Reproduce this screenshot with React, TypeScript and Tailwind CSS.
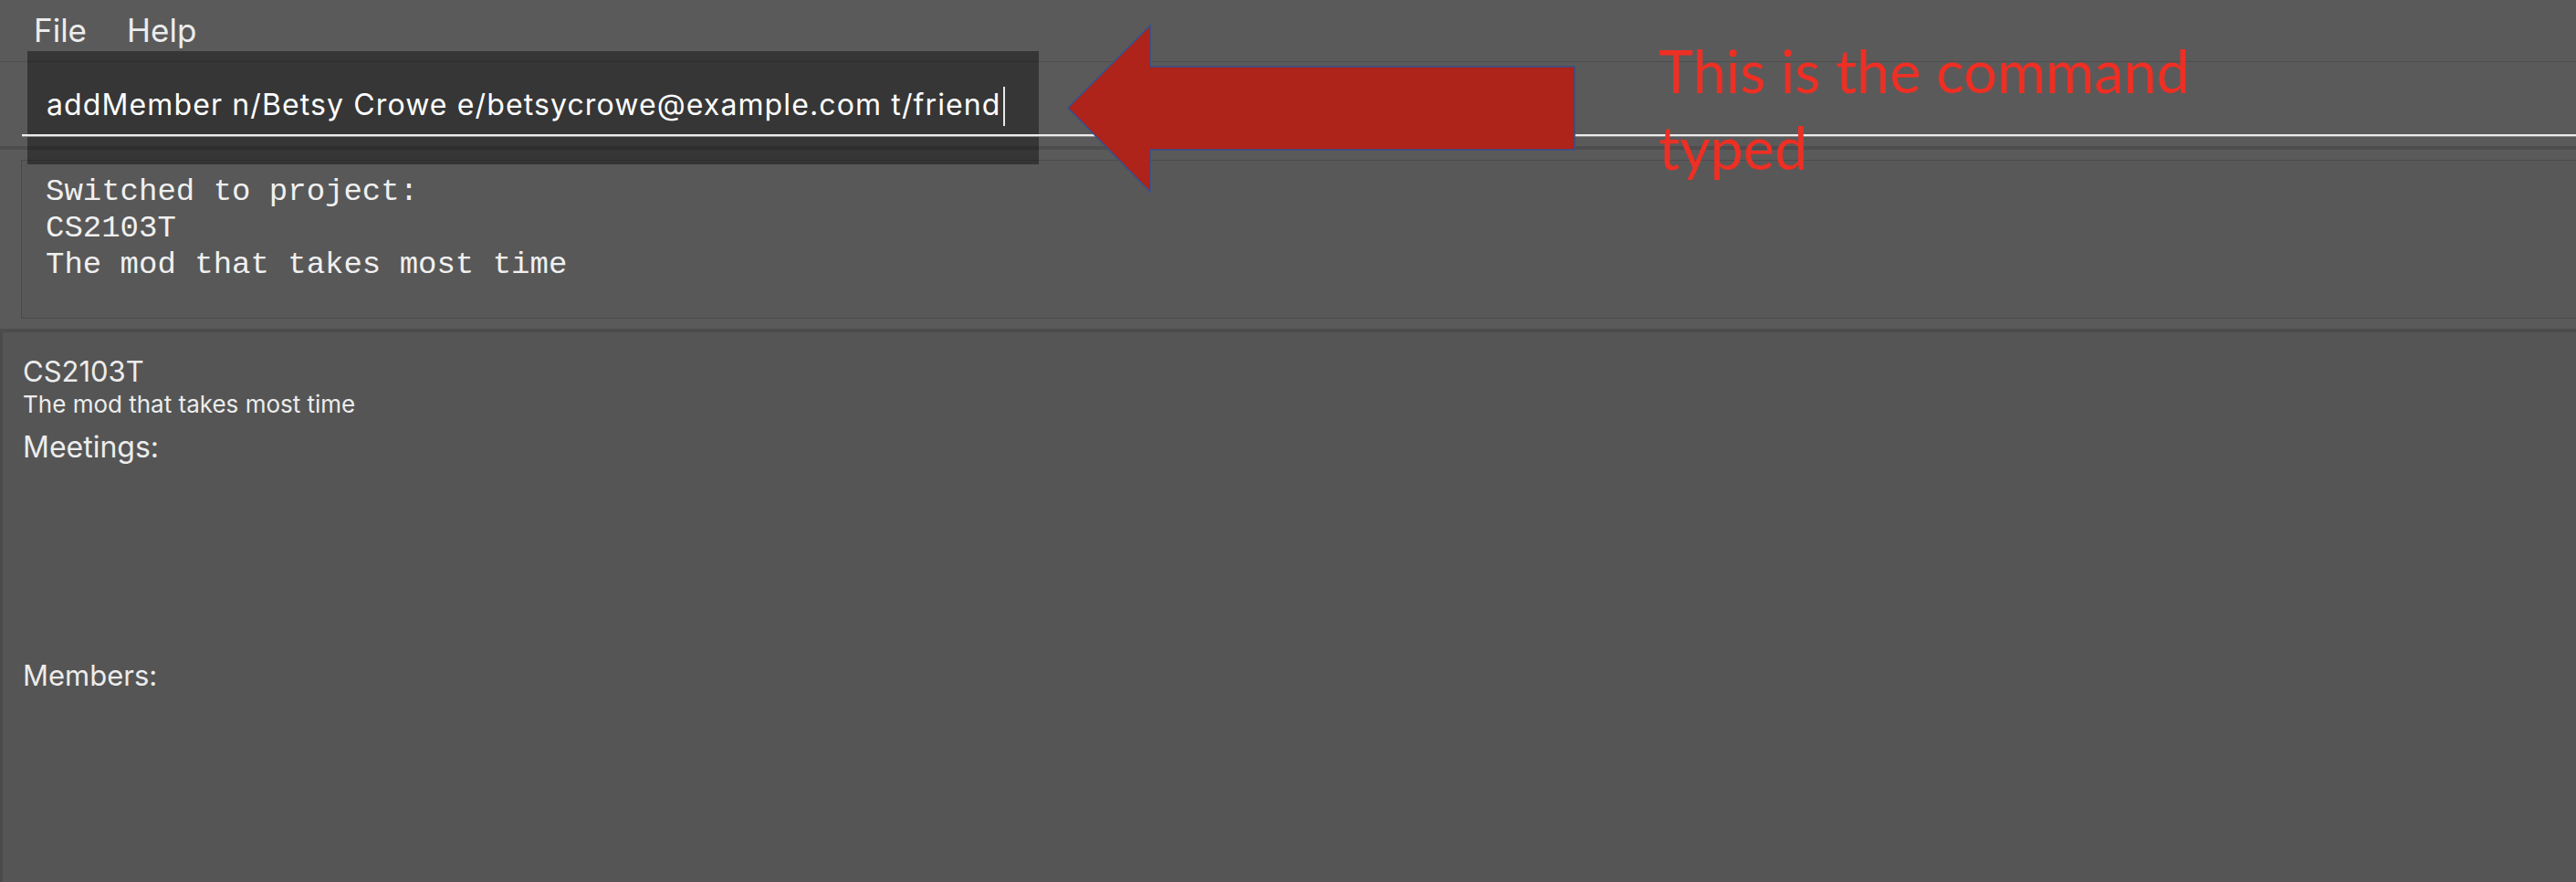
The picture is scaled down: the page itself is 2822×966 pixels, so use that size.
export default function App() {
  const sans = { fontFamily: "Inter, 'Liberation Sans', sans-serif" };
  return (
    <div className="relative w-full h-[966px] overflow-hidden bg-[#5a5a5a] flex flex-col text-[#f2f2f2]" style={sans}>
      {/* menu bar */}
      <div className="h-[68px] shrink-0 border-b border-[#4e4e4e] flex items-center pl-[37px] gap-[44px] text-[35px] leading-none text-[#ececec]">
        <span>File</span>
        <span>Help</span>
      </div>

      {/* command box */}
      <div className="h-[92px] shrink-0 flex items-end pl-[24px] pb-[10px]">
        <div className="relative z-10 w-full">
          <div className="flex items-end pl-[27px] pb-[13px] border-b-2 border-[#ececec]">
            <span className="text-[32px] leading-[38px] tracking-[0.035em] text-white whitespace-nowrap">
              addMember n/Betsy Crowe e/betsycrowe@example.com t/friend
            </span>
            <span className="ml-[2px] mb-[-4px] w-[2px] h-[43px] bg-[#e8e8e8]" />
          </div>
          <div className="h-px bg-[#8c8c8c]" />
        </div>
      </div>
      <div className="h-[4px] shrink-0 bg-[#4d4d4d]" />

      {/* result display */}
      <div className="shrink-0 pt-[11px] pb-[11px] pl-[23px]">
        <div
          className="h-[174px] border border-r-0 border-[#4a4a4a] bg-[#585858] pl-[26px] pt-[14px] text-[34px] leading-[40px] text-[#f0f0f0]"
          style={{ fontFamily: "'Liberation Mono', 'Courier New', monospace" }}
        >
          <div>Switched to project:</div>
          <div>CS2103T</div>
          <div>The mod that takes most time</div>
        </div>
      </div>
      <div className="h-[4px] shrink-0 bg-[#4c4c4c]" />

      {/* project panel */}
      <div className="flex-1 bg-[#555555] border-l-[3px] border-[#4a4a4a] pl-[22px] pt-[25px] text-[#ececec]">
        <div className="text-[31px] leading-[36px]">CS2103T</div>
        <div className="mt-[3px] text-[26px] leading-[30px]">The mod that takes most time</div>
        <div className="mt-[13px] text-[32px] leading-[38px]">Meetings:</div>
        <div className="h-[212px]" />
        <div className="text-[31px] leading-[38px]">Members:</div>
      </div>

      {/* screenshot annotations */}
      <div className="absolute left-[30px] top-[56px] w-[1108px] h-[124px] bg-black/40" />
      <svg className="absolute left-0 top-0 z-20" width="1740" height="230" viewBox="0 0 1740 230">
        <polygon
          points="1170,118 1260,28 1260,73 1725,73 1725,164 1260,164 1260,210"
          fill="#ae231a"
          stroke="#34508f"
          strokeWidth="1.5"
        />
      </svg>
      <div
        className="absolute left-[1817px] top-[35px] z-20 origin-left scale-x-[0.98] text-[66px] leading-[84px] text-[#ee2f24] whitespace-nowrap"
        style={{ fontFamily: "Lato, 'Open Sans', sans-serif" }}
      >
        This is the command
        <br />
        typed
      </div>
    </div>
  );
}
